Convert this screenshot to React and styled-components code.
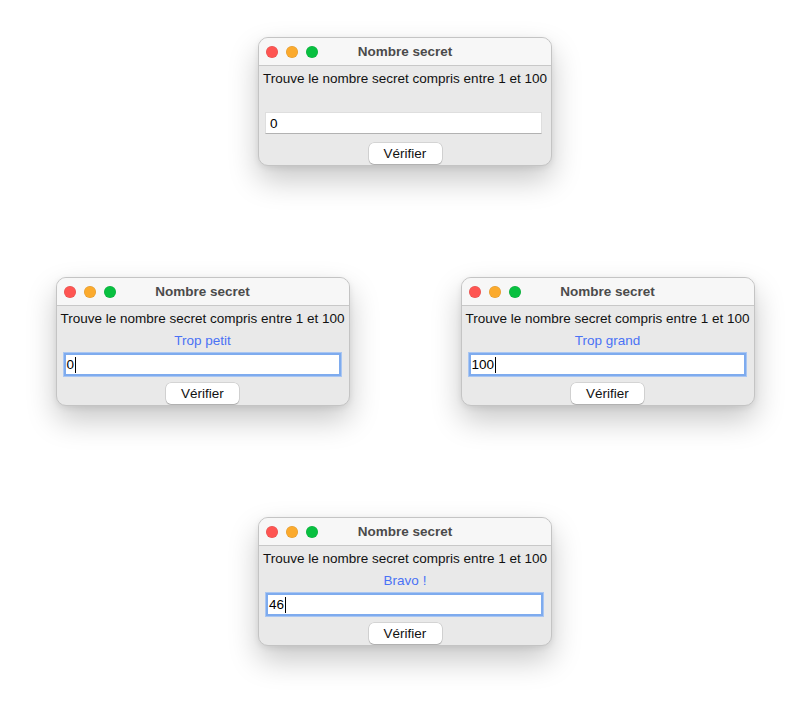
import styled, { createGlobalStyle } from "styled-components"

const windows = [
	[{ message: "", value: "0", focused: false }],
	[
		{ message: "Trop petit", value: "0", focused: true },
		{ message: "Trop grand", value: "100", focused: true },
	],
	[{ message: "Bravo !", value: "46", focused: true }],
]

export default function App() {
	return (
		<>
			<GlobalStyle />
			<Page>
				{windows.map((row, i) => (
					<Row key={i}>
						{row.map((w, j) => (
							<SecretWindow key={j} {...w} />
						))}
					</Row>
				))}
			</Page>
		</>
	)
}

function SecretWindow({ message, value, focused }) {
	return (
		<Window>
			<TitleBar>
				<Lights>
					<Light $color="#fe5552" />
					<Light $color="#fbaa2d" />
					<Light $color="#08c040" />
				</Lights>
				<Title>Nombre secret</Title>
			</TitleBar>
			<Body>
				<Label>Trouve le nombre secret compris entre 1 et 100</Label>
				<Message>{message}</Message>
				<FieldRow>
					<Field $focused={focused}>
						{value}
						{focused && <Caret />}
					</Field>
				</FieldRow>
				<Button>Vérifier</Button>
			</Body>
		</Window>
	)
}

const GlobalStyle = createGlobalStyle`
	body {
		margin: 0;
		background: #fff;
		font-family: "Liberation Sans", Arial, sans-serif;
	}
`

const Page = styled.main`
	width: 810px;
	height: 720px;
	padding-top: 37px;
	box-sizing: border-box;
	display: flex;
	flex-direction: column;
	gap: 111px;
`

const Row = styled.div`
	display: flex;
	justify-content: center;
	gap: 111px;
`

const Window = styled.section`
	width: 294px;
	height: 129px;
	box-sizing: border-box;
	border: 1px solid #c4c4c4;
	border-radius: 10px;
	background: #e9e9e9;
	overflow: hidden;
	box-shadow: 0 14px 30px rgba(0, 0, 0, 0.22), 0 2px 6px rgba(0, 0, 0, 0.08);
	display: flex;
	flex-direction: column;
`

const TitleBar = styled.header`
	height: 28px;
	box-sizing: border-box;
	background: #f7f7f7;
	border-bottom: 1px solid #c8c8c8;
	display: grid;
	grid-template-columns: 1fr auto 1fr;
	align-items: center;
`

const Lights = styled.div`
	display: flex;
	gap: 8px;
	padding-left: 7px;
`

const Light = styled.span`
	width: 12px;
	height: 12px;
	border-radius: 50%;
	background: ${(p) => p.$color};
	box-shadow: inset 0 0 0 0.5px rgba(0, 0, 0, 0.12);
`

const Title = styled.h1`
	margin: 0;
	font-size: 13.5px;
	font-weight: bold;
	color: #4b4b4b;
`

const Body = styled.div`
	display: flex;
	flex-direction: column;
	align-items: center;
	padding-top: 5px;
`

const Label = styled.p`
	margin: 0;
	height: 16px;
	line-height: 16px;
	font-size: 13.5px;
	color: #111;
	white-space: nowrap;
`

const Message = styled.p`
	margin: 6px 0 0;
	height: 16px;
	line-height: 16px;
	font-size: 13.5px;
	color: #4a72f5;
`

const FieldRow = styled.div`
	align-self: stretch;
	height: 25px;
	margin-top: 3px;
	padding-left: 6px;
	display: flex;
	align-items: flex-start;
`

const Field = styled.div`
	box-sizing: border-box;
	width: ${(p) => (p.$focused ? "279px" : "277px")};
	height: ${(p) => (p.$focused ? "25px" : "22px")};
	background: #fff;
	display: flex;
	align-items: center;
	font-size: 13.5px;
	color: #000;
	padding-left: ${(p) => (p.$focused ? "3px" : "4px")};
	border: ${(p) => (p.$focused ? "1px solid #a9c6f2" : "1px solid #dedede")};
	border-bottom-color: ${(p) => (p.$focused ? "#a9c6f2" : "#b2b2b2")};
	box-shadow: ${(p) => (p.$focused ? "inset 0 0 0 2px #7eabee" : "none")};
`

const Caret = styled.span`
	width: 1px;
	height: 16px;
	background: #000;
	margin-left: 1px;
`

const Button = styled.button`
	margin-top: 6px;
	width: 73px;
	height: 21px;
	padding: 0;
	border: none;
	border-radius: 5px;
	background: #fff;
	font-family: inherit;
	font-size: 13.5px;
	color: #111;
	box-shadow: 0 0 0 0.5px rgba(0, 0, 0, 0.18), 0 1px 1px rgba(0, 0, 0, 0.18);
`
